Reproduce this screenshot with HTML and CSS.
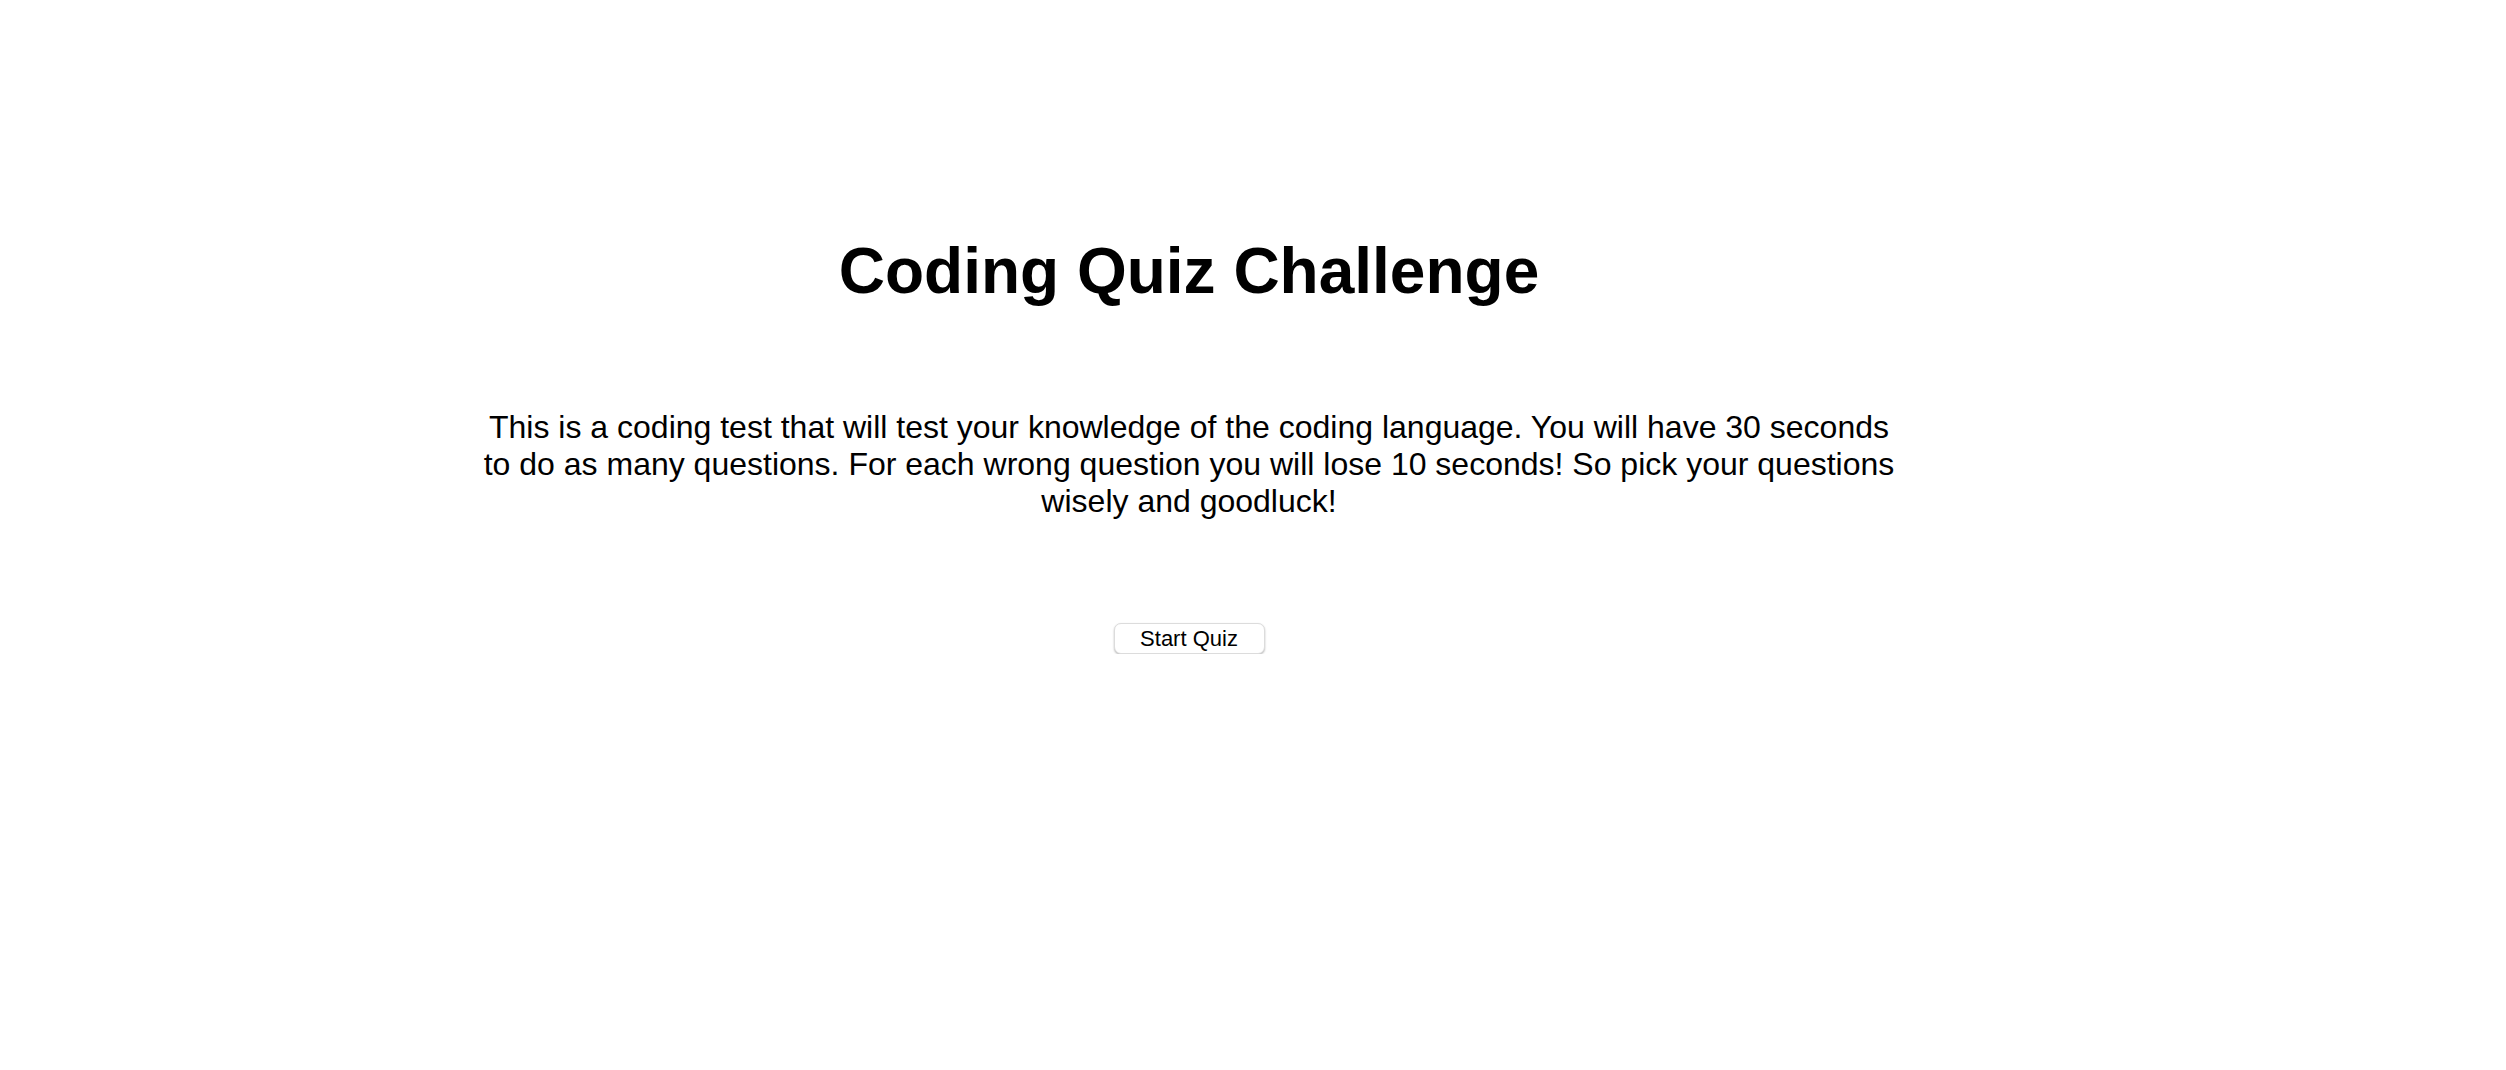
FILE: index.html
```html
<!DOCTYPE html>
<html lang="en">
<head>
<meta charset="utf-8">
<title>Coding Quiz Challenge</title>
<link rel="stylesheet" href="styles.css">
</head>
<body>
<main class="quiz">
  <h1 class="quiz-title">Coding Quiz Challenge</h1>
  <p class="quiz-intro">This is a coding test that will test your knowledge of the coding language. You will have 30 seconds to do as many questions. For each wrong question you will lose 10 seconds! So pick your questions wisely and goodluck!</p>
  <button class="start-btn" type="button">Start Quiz</button>
</main>
</body>
</html>
```

FILE: styles.css
```css
html, body {
  margin: 0;
  padding: 0;
  background: #ffffff;
}

body {
  font-family: "Liberation Sans", Arial, Helvetica, sans-serif;
  color: #000;
}

.quiz {
  box-sizing: border-box;
  width: 2506px;
  padding: 234px 128px 0 0;
  display: flex;
  flex-direction: column;
  align-items: center;
  text-align: center;
}

.quiz-title {
  margin: 0;
  font-size: 64px;
  font-weight: bold;
  line-height: normal;
}

.quiz-intro {
  margin: 101px 0 0;
  width: 1424px;
  font-size: 32px;
  line-height: normal;
}

.start-btn {
  margin-top: 103px;
  box-sizing: border-box;
  width: 151px;
  height: 31px;
  padding: 0;
  font-family: "Liberation Sans", Arial, Helvetica, sans-serif;
  font-size: 22px;
  line-height: 1;
  color: #000;
  background: #ffffff;
  border: 1px solid #dcdcdc;
  border-radius: 7px;
  box-shadow: 0 1px 2px rgba(0, 0, 0, 0.28);
  cursor: pointer;
}
```
